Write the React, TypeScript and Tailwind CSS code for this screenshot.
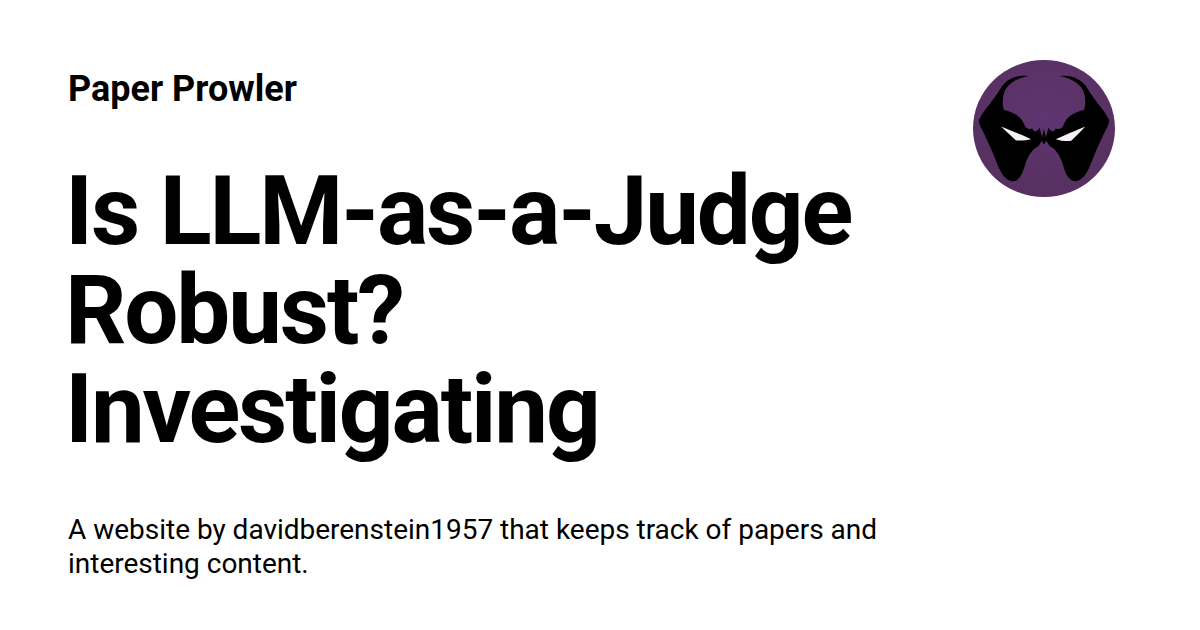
const Logo = () => {
  return (
    <svg width="142" height="137" viewBox="40 30 425 410" className="block shrink-0">
      <defs>
        <radialGradient id="disc" cx="50%" cy="40%" r="65%">
          <stop offset="0%" stopColor="#5f3570" />
          <stop offset="100%" stopColor="#56305f" />
        </radialGradient>
        <filter id="soft">
          <feGaussianBlur stdDeviation="1.2" />
        </filter>
      </defs>
      <ellipse cx="252.5" cy="235" rx="212.5" ry="205" fill="url(#disc)" />
      <g filter="url(#soft)">
        <path
          fill="#000"
          d="M205 78 C172 75 142 84 122 116 C103 148 76 176 60 204 C56 212 58 220 62 228 C78 260 95 295 108 330 C120 362 135 392 158 393 C180 394 190 365 197 340 C205 315 220 295 236 288 L246 272 L252 284 L259 272 L270 288 C286 295 300 315 308 340 C315 365 325 394 347 393 C370 392 385 362 397 330 C410 295 427 260 443 228 C447 220 449 212 445 204 C429 176 402 148 383 116 C363 84 333 75 300 78 C328 84 352 94 368 118 C378 138 378 165 372 180 C345 186 322 198 312 222 C306 236 296 240 288 234 C282 248 272 246 266 232 L258 262 L252 236 L247 262 L239 232 C233 246 223 248 217 234 C209 240 199 236 193 222 C183 198 160 186 133 180 C127 165 127 138 137 118 C153 94 177 84 205 78 Z"
        />
        <path fill="#f4f2f4" d="M124 229 C150 240 190 256 214 267 C200 270 180 272 168 270 C155 258 138 243 124 229 Z" />
        <path fill="#f4f2f4" d="M376 229 C350 240 312 256 288 267 C302 272 322 274 334 272 C348 258 364 243 376 229 Z" />
      </g>
    </svg>
  );
};

export default function App() {
  return (
    <div className="w-[1200px] h-[630px] bg-white text-black font-['Roboto',sans-serif] overflow-hidden flex justify-between pl-[68px] pr-[85px] pt-[60px]">
      <div className="w-[832px]">
        <div className="text-[36px] leading-[58px] font-bold">Paper Prowler</div>
        <h1 className="mt-[44px] text-[96px] leading-[99px] font-bold tracking-[-0.0225em] -ml-[3px]">Is LLM-as-a-Judge Robust? Investigating</h1>
        <p className="mt-[54px] text-[28px] leading-[34px] tracking-[-0.0005em]">
          A website by davidberenstein1957 that keeps track of papers and interesting content.
        </p>
      </div>
      <Logo />
    </div>
  );
}
